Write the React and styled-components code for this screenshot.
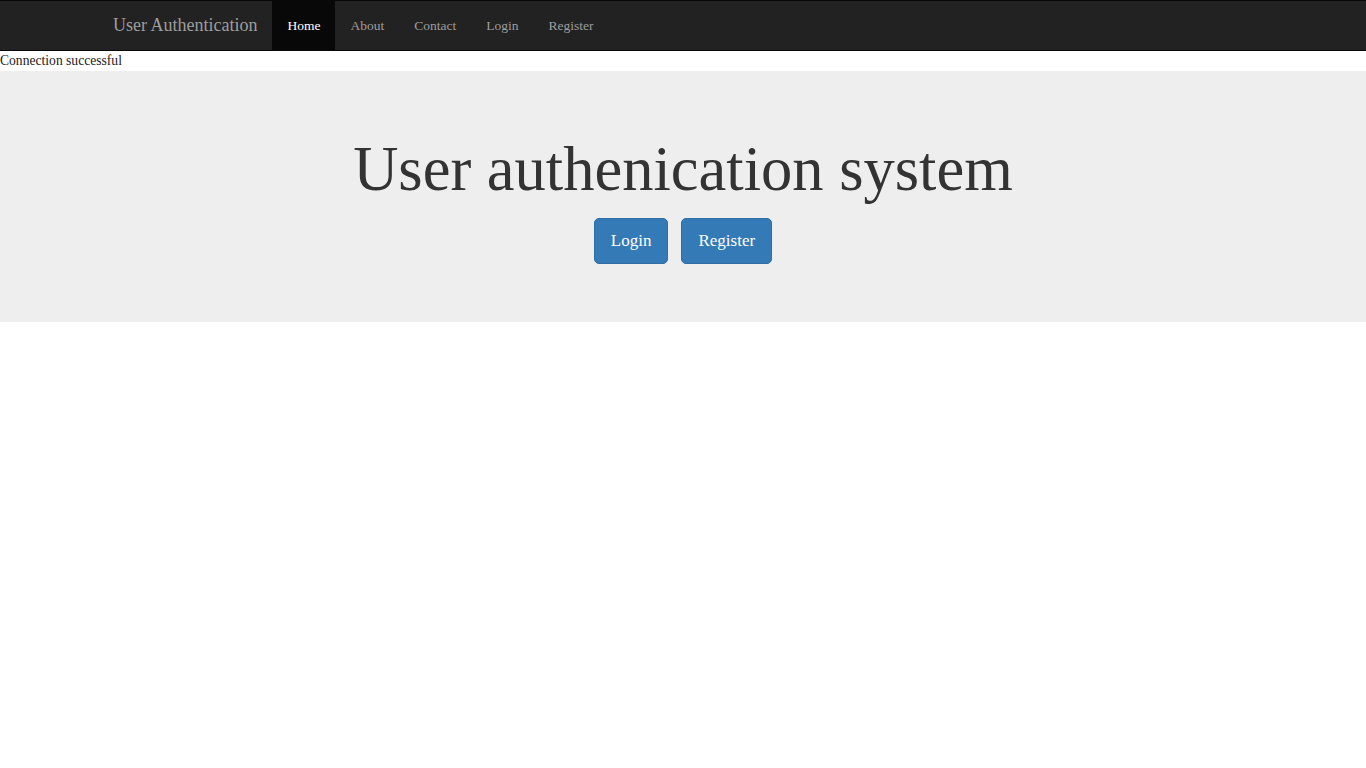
import React from "react";
import styled, { createGlobalStyle } from "styled-components";

const GlobalStyle = createGlobalStyle`
  * { box-sizing: border-box; }
  body {
    margin: 0;
    font-family: "Liberation Serif", serif;
    font-size: 14px;
    line-height: 1.42857;
    color: #333;
    background: #fff;
  }
`;

const Navbar = styled.nav`
  background: #222;
  border: 1px solid #080808;
  border-width: 1px 0;
`;

const NavContainer = styled.div`
  width: 1170px;
  margin: 0 auto;
  padding: 0 15px;
  display: flex;
  align-items: stretch;
  height: 49px;
`;

const Brand = styled.a`
  color: #9d9d9d;
  font-size: 18px;
  line-height: 20px;
  padding: 14px 15px;
  margin-left: -15px;
  text-decoration: none;
`;

const NavList = styled.ul`
  display: flex;
  list-style: none;
  margin: 0;
  padding: 0;
`;

const NavLink = styled.a`
  display: block;
  height: 100%;
  padding: 15px 15px 14px;
  line-height: 20px;
  font-size: 13.5px;
  text-decoration: none;
  color: ${(p) => (p.$active ? "#fff" : "#9d9d9d")};
  background: ${(p) => (p.$active ? "#080808" : "transparent")};
`;

const Status = styled.div`
  font-size: 13.6px;
  line-height: 20px;
  color: #222;
`;

const Jumbotron = styled.section`
  background: #eee;
  height: 251px;
  padding-top: 60px;
  text-align: center;
`;

const Title = styled.h1`
  margin: 0;
  font-size: 62.5px;
  font-weight: 400;
  line-height: 76px;
  color: #333;
`;

const Actions = styled.div`
  display: flex;
  justify-content: center;
  gap: 13px;
  margin-top: 11px;
`;

const Button = styled.a`
  display: inline-block;
  padding: 10px 16px;
  font-size: 17px;
  line-height: 24px;
  color: #fff;
  background: #337ab7;
  border: 1px solid #2e6da4;
  border-radius: 5px;
  text-decoration: none;
`;

const links = ["Home", "About", "Contact", "Login", "Register"];

export default function App() {
  return (
    <>
      <GlobalStyle />
      <Navbar>
        <NavContainer>
          <Brand href="#">User Authentication</Brand>
          <NavList>
            {links.map((l, i) => (
              <li key={l}>
                <NavLink href="#" $active={i === 0}>
                  {l}
                </NavLink>
              </li>
            ))}
          </NavList>
        </NavContainer>
      </Navbar>
      <Status>Connection successful</Status>
      <Jumbotron>
        <Title>User authenication system</Title>
        <Actions>
          <Button href="#">Login</Button>
          <Button href="#">Register</Button>
        </Actions>
      </Jumbotron>
    </>
  );
}
